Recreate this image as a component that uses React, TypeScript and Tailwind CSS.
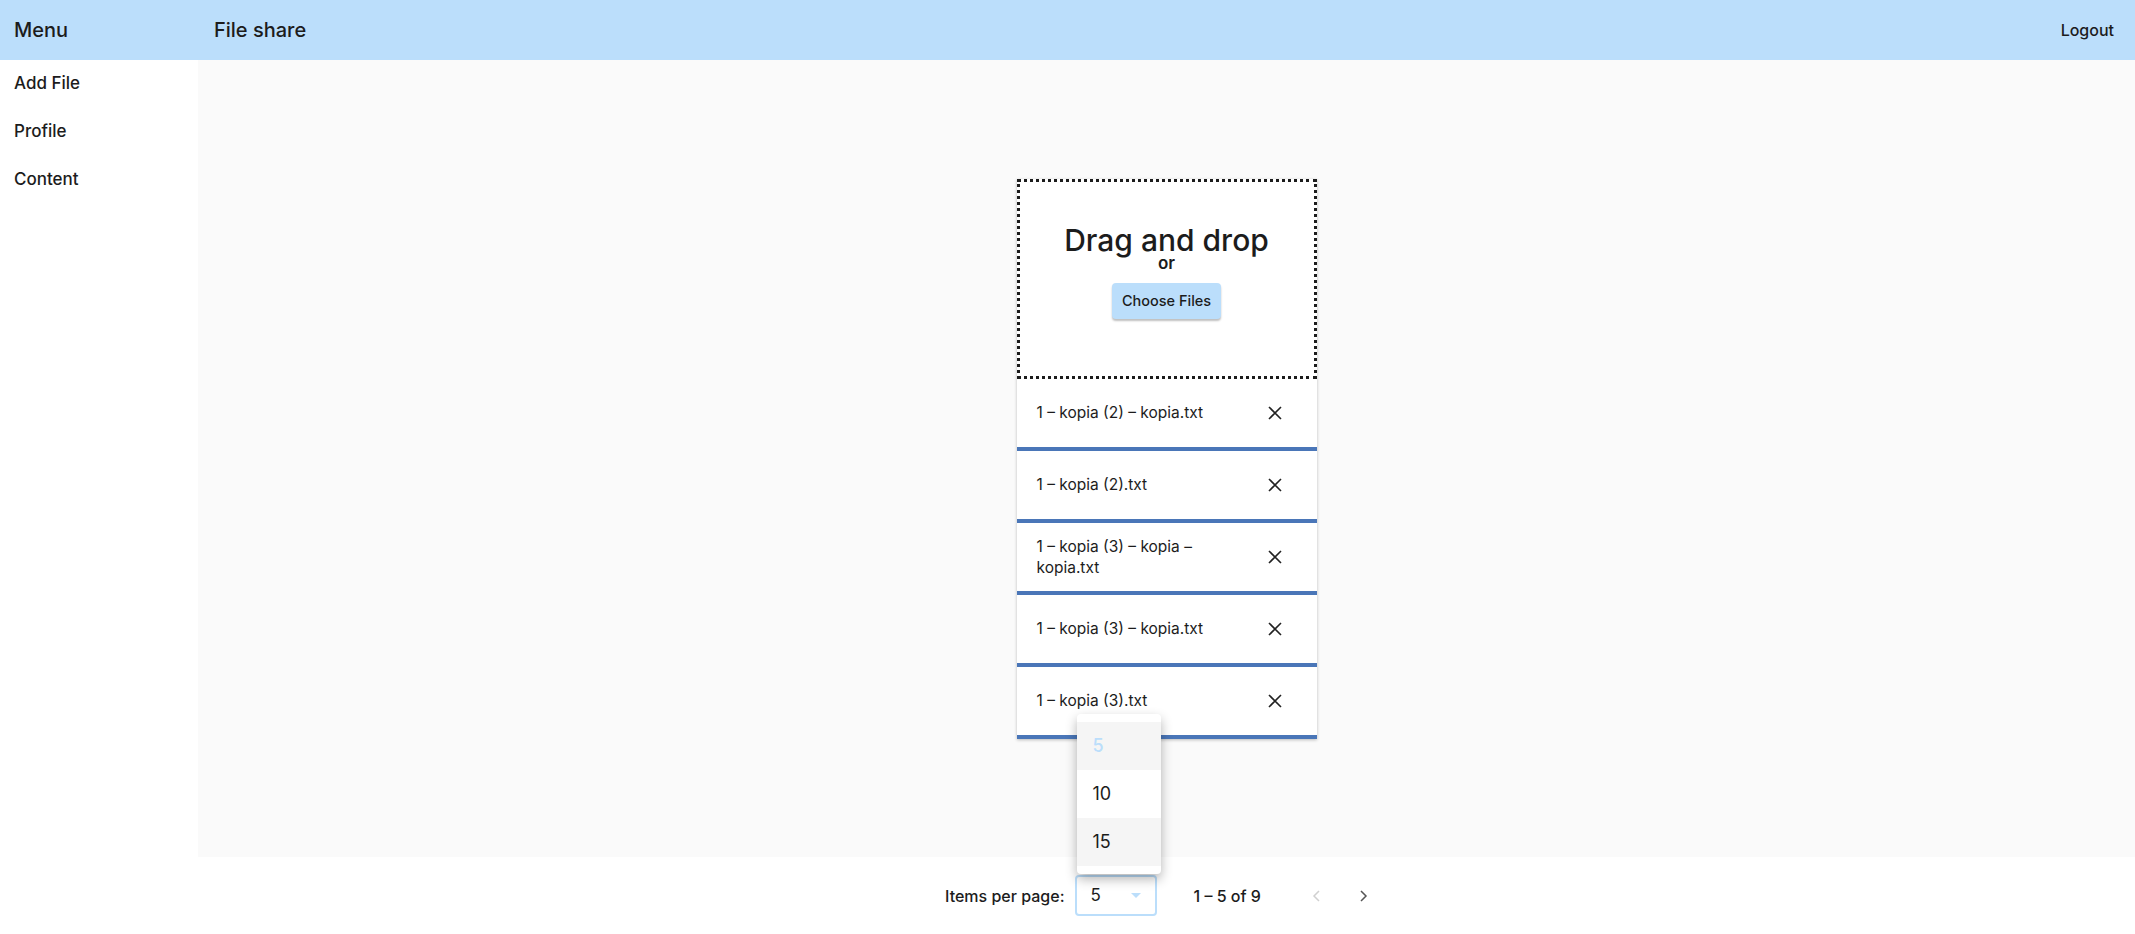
import React from "react";

const files = [
  "1 – kopia (2) – kopia.txt",
  "1 – kopia (2).txt",
  "1 – kopia (3) – kopia – kopia.txt",
  "1 – kopia (3) – kopia.txt",
  "1 – kopia (3).txt",
];

function XIcon() {
  return (
    <svg width="16" height="16" viewBox="0 0 16 16" fill="none" stroke="#222" strokeWidth="1.6">
      <path d="M2 2 L14 14 M14 2 L2 14" />
    </svg>
  );
}

export default function App() {
  const font = { fontFamily: "Inter, 'Noto Sans', sans-serif" };
  return (
    <div className="h-screen w-full flex flex-col text-[#1c1c1c]" style={font}>
      <header className="h-[60px] shrink-0 bg-[#bbdefb] flex items-center">
        <div className="w-[198px] pl-[14px] text-[20px] font-medium">Menu</div>
        <div className="pl-[16px] text-[20px] font-medium">File share</div>
        <div className="ml-auto pr-[21px] text-[16px] font-medium">Logout</div>
      </header>
      <div className="flex-1 flex min-h-0">
        <aside className="w-[198px] shrink-0 bg-white flex flex-col">
          {["Add File", "Profile", "Content"].map((t) => (
            <div key={t} className="h-[48px] flex items-center pl-[14px] text-[17px] font-medium">
              {t}
            </div>
          ))}
        </aside>
        <div className="flex-1 flex flex-col">
          <main className="flex-1 bg-[#fafafa] flex items-center justify-center">
            <div className="w-[300px] bg-white shadow-[0_1px_3px_rgba(0,0,0,0.25)] relative">
              <div className="h-[200px] border-[3px] border-dotted border-[#1c1c1c] flex flex-col items-center justify-center pb-[14px]">
                <div className="text-[30px] font-medium leading-[31px]">Drag and drop</div>
                <div className="text-[17px] font-semibold leading-[15px]">or</div>
                <button className="mt-[12px] h-[36px] px-[10px] rounded-[4px] bg-[#bbdefb] text-[14.5px] font-medium shadow-[0_2px_2px_rgba(0,0,0,0.25)]">
                  Choose Files
                </button>
              </div>
              {files.map((f) => (
                <div key={f} className="h-[72px] border-b-[4px] border-[#4a76b8] flex items-center pl-[20px] pr-[34px]">
                  <div className="w-[195px] text-[15.5px] leading-[21px]">{f}</div>
                  <div className="ml-auto flex items-center">
                    <XIcon />
                  </div>
                </div>
              ))}
              <div className="absolute left-[60px] top-[535px] w-[84px] bg-white py-[8px] rounded-[4px] shadow-[0_5px_12px_rgba(0,0,0,0.3)] z-10">
                <div className="h-[48px] flex items-center pl-[16px] bg-[#f5f5f5] text-[18px] text-[#bbdefb] font-medium">5</div>
                <div className="h-[48px] flex items-center pl-[16px] text-[18px]">10</div>
                <div className="h-[48px] flex items-center pl-[16px] bg-[#f5f5f5] text-[18px]">15</div>
              </div>
            </div>
          </main>
          <footer className="h-[77px] shrink-0 bg-white flex items-center justify-center">
            <div className="flex items-center">
              <span className="text-[16px] font-medium">Items per page:</span>
              <div className="ml-[10px] w-[82px] h-[41px] border-2 border-[#bbdefb] rounded-[4px] flex items-center pl-[14px] pr-[14px]">
                <span className="text-[17px]">5</span>
                <svg className="ml-auto" width="10" height="5" viewBox="0 0 10 5">
                  <path d="M0 0 L10 0 L5 5 Z" fill="#bbdefb" />
                </svg>
              </div>
              <span className="ml-[37px] text-[16px] font-medium">1 – 5 of 9</span>
              <div className="ml-[31px] w-[48px] h-[40px] flex items-center justify-center">
                <svg width="8" height="12" viewBox="0 0 8 12" fill="none" stroke="#d0d0d0" strokeWidth="1.5">
                  <path d="M7 1 L2 6 L7 11" />
                </svg>
              </div>
              <div className="w-[48px] h-[40px] flex items-center justify-center">
                <svg width="8" height="12" viewBox="0 0 8 12" fill="none" stroke="#555" strokeWidth="1.5">
                  <path d="M1 1 L6 6 L1 11" />
                </svg>
              </div>
            </div>
          </footer>
        </div>
      </div>
    </div>
  );
}
